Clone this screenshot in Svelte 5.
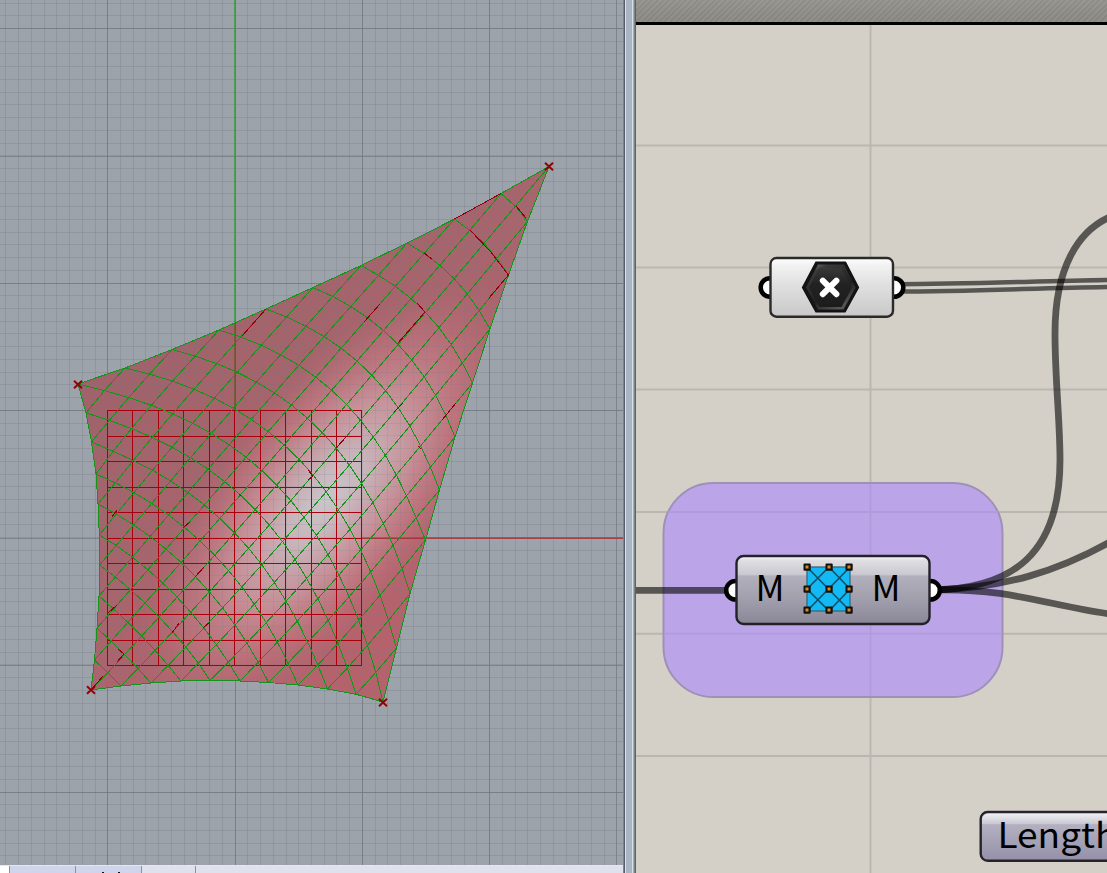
<script>
  const top = [[78,384],[125,368],[172,349.5],[219,330],[266,309],[313,287.5],[361,265.5],[407,243],[454.5,219],[501,193.5],[549,166.5]];
  const left = [[78,384],[86,413],[91.5,442],[96,474],[98,504],[99.3,535],[99.6,565],[99,596],[97,628],[94.5,660],[91,690]];
  const bottom = [[91,690],[121,686],[151,683],[181,681],[210,680.3],[240,681],[268.5,682.5],[298,685],[327.5,689],[356,694.3],[383,702]];
  const right = [[549,166.5],[527.5,221.5],[508.5,275],[490,329],[472.5,383],[455,437],[439.5,490],[425.5,540],[410,593.5],[396.5,648],[383,702]];

  // Relaxed cable net: edges are pinned, interior knots settle between their diagonal neighbours.
  const net = [];
  for (let j = 0; j <= 20; j++) {
    net.push([]);
    for (let i = 0; i <= 20; i++) net[j].push([275, 485]);
  }
  for (let k = 0; k <= 10; k++) {
    net[0][2 * k] = top[k];
    net[20][2 * k] = bottom[k];
    net[2 * k][0] = left[k];
    net[2 * k][20] = right[k];
  }
  for (let n = 0; n < 500; n++)
    for (let j = 1; j < 20; j++)
      for (let i = 1; i < 20; i++) {
        if ((i + j) % 2) continue;
        const q = [net[j-1][i-1], net[j-1][i+1], net[j+1][i-1], net[j+1][i+1]];
        net[j][i] = [0, 1].map((c) => (q[0][c] + q[1][c] + q[2][c] + q[3][c]) / 4);
      }
  const pts = (a) => a.map((p) => p[0].toFixed(1) + ',' + p[1].toFixed(1)).join(' ');
  const strands = [];
  const trace = (i, j, di) => {
    const a = [];
    while (i >= 0 && i <= 20 && j >= 0 && j <= 20) {
      a.push(net[j][i]);
      i += di;
      j += 1;
    }
    strands.push(pts(a));
  };
  for (let k = 0; k < 20; k += 2) trace(k, 0, 1);
  for (let k = 2; k < 20; k += 2) trace(0, k, 1);
  for (let k = 2; k <= 20; k += 2) trace(k, 0, -1);
  for (let k = 2; k < 20; k += 2) trace(20, k, -1);
  const outline = pts([...top, ...right.slice(1), ...[...bottom].reverse().slice(1), ...[...left].reverse().slice(1)]);

  const minorX = Array.from({ length: 50 }, (_, i) => Math.round(-20 + i * 12.73) + 0.5);
  const minorY = Array.from({ length: 69 }, (_, i) => Math.round(2.5 + i * 12.73) + 0.5);
  const majorX = [107.5, 235.5, 362.5, 489.5, 616.5];
  const majorY = [28.5, 156.5, 283.5, 410.5, 538.5, 665.5, 792.5];
  const cells = Array.from({ length: 11 }, (_, i) => i * 25.44);
  const anchors = [[549, 166.5], [78, 384.5], [91, 690], [383, 702.5]];
  const marks = 'M266 309L242 336M380 304L364 322M454.5 219L501 193.5M516 206L526 218M470 230L490 251L508.5 275L489 298M424 253L432 259M417 303L425 312L398 343M403 403L394 412M456 403L442 420M418 446L421 449M347 436L336 448M308 470L313 476L308 480M117 510L112 517M190 522L183 528M239 494L241 496M204 567L195 577M117 605L108 613M179 623L172 633M210 622L203 628M118 649L124 654L117 662M103 676L92 689';
  const knots = [2, 24, 45].flatMap((y) => [2, 24, 44].map((x) => [x, y]));
</script>

<div class="app">
  <section class="viewport">
    <svg class="scene" width="623" height="865" viewBox="0 0 623 865">
      <defs>
        <linearGradient id="base" gradientUnits="userSpaceOnUse" x1="150" y1="350" x2="390" y2="600">
          <stop offset="0" stop-color="#a0636b" /><stop offset=".45" stop-color="#a7656d" /><stop offset="1" stop-color="#b4636d" />
        </linearGradient>
        <radialGradient id="shine" gradientUnits="userSpaceOnUse" cx="0" cy="0" r="1" gradientTransform="translate(326 500) rotate(-51) scale(265 112)">
          <stop offset="0" stop-color="#c9c6cb" /><stop offset=".2" stop-color="#c9b9bf" stop-opacity=".95" />
          <stop offset=".48" stop-color="#ca979f" stop-opacity=".85" /><stop offset=".72" stop-color="#c57c85" stop-opacity=".55" />
          <stop offset="1" stop-color="#b86a72" stop-opacity="0" />
        </radialGradient>
        <clipPath id="sheet"><polygon points={outline} /></clipPath>
      </defs>
      <g class="minor">
        {#each minorX as x}<path d="M{x} 0V865" />{/each}
        {#each minorY as y}<path d="M0 {y}H623" />{/each}
      </g>
      <g class="major">
        {#each majorX as x}<path d="M{x} 0V865" />{/each}
        {#each majorY as y}<path d="M0 {y}H623" />{/each}
      </g>
      <path class="axis-y" d="M235.1 0V323" />
      <path class="axis-x" d="M425 538.1H623" />
      <polygon points={outline} fill="url(#base)" />
      <polygon points={outline} fill="url(#shine)" />
      <g class="minor through" clip-path="url(#sheet)">
        {#each minorX as x}<path d="M{x} 0V865" />{/each}
        {#each minorY as y}<path d="M0 {y}H623" />{/each}
      </g>
      <path d="M235.1 323V410" stroke="#655b2a" stroke-width="1.6" />
      <path d="M362 538.2H425" stroke="#a0373d" stroke-width="1.6" />
      <g class="cells">
        {#each cells as c}
          <path d="M{Math.round(107 + c) + 0.5} 410V665.5" />
          <path d="M107 {Math.round(410.4 + c * 1.002) + 0.5}H362" />
        {/each}
      </g>
      <g class="strands">
        {#each strands as s}<polyline points={s} />{/each}
        <polygon points={outline} />
      </g>
      <path class="marks" d={marks} />
      {#each anchors as [x, y]}
        <path class="anchor" d="M{x - 4} {y - 3.7}l8 7.4m0 -7.4l-8 7.4" />
      {/each}
    </svg>
    <div class="tabs"><i class="t0"></i><i class="t1"></i><i class="t2"><b></b><b></b></i><i class="t3"></i><i class="t4"></i></div>
  </section>
  <div class="splitter"></div>
  <section class="editor">
    <div class="toolbar"></div>
    <div class="canvas">
      <svg width="471" height="848" viewBox="636 25 471 848">
        <defs>
          <linearGradient id="light" x1="0" y1="0" x2="0" y2="1">
            <stop offset="0" stop-color="#fff" /><stop offset=".12" stop-color="#f2f2f2" /><stop offset=".5" stop-color="#dedede" /><stop offset="1" stop-color="#c8c8c8" />
          </linearGradient>
          <linearGradient id="steel" x1="0" y1="0" x2="0" y2="1">
            <stop offset="0" stop-color="#fafafa" /><stop offset=".07" stop-color="#dedee2" /><stop offset=".28" stop-color="#c9c8d0" />
            <stop offset=".29" stop-color="#b2b0bd" /><stop offset=".65" stop-color="#a19eac" /><stop offset="1" stop-color="#898696" />
          </linearGradient>
          <linearGradient id="lilac" x1="0" y1="0" x2="0" y2="1">
            <stop offset="0" stop-color="#f4f4f8" /><stop offset=".24" stop-color="#cac9d3" /><stop offset=".26" stop-color="#b3b0c1" /><stop offset="1" stop-color="#9490a8" />
          </linearGradient>
          <linearGradient id="hex" x1="0" y1="0" x2=".6" y2="1">
            <stop offset="0" stop-color="#8a8a8a" /><stop offset=".2" stop-color="#3a3a3a" /><stop offset=".7" stop-color="#202020" /><stop offset="1" stop-color="#555" />
          </linearGradient>
          <linearGradient id="core" x1="0" y1="0" x2="0" y2="1">
            <stop offset="0" stop-color="#383838" /><stop offset=".4" stop-color="#222" /><stop offset="1" stop-color="#1c1c1c" />
          </linearGradient>
        </defs>
        <path d="M870.5 25V873M636 145.5H1107M636 267.5H1107M636 389.5H1107M636 512H1107M636 633.7H1107M636 756H1107" stroke="#bbb7b0" stroke-width="2" fill="none" />
        <rect x="663.5" y="483" width="339" height="214" rx="50" fill="#bba5e8" stroke="#9f90b8" stroke-width="2" />
        <path d="M870.5 484V696M668 512H998M664 633.7H1002" stroke="#b09cdb" stroke-width="1.8" fill="none" />
        <g class="wires">
          <path d="M636 590.3H730" />
          <path d="M934 590C1012 588 1060 555 1060 460C1060 420 1055 380 1055 333C1055 268 1078 231 1110 217" />
          <path d="M934 590C1005 588 1058 571 1110 542" />
          <path d="M934 590C1010 588 1050 606 1110 614" />
          <path class="thin" d="M896 284.2C970 284 1040 281 1110 280" />
          <path class="thin" d="M896 291.6C970 291.5 1040 288 1110 287" />
        </g>
        <g fill="#fff" stroke="#000" stroke-width="4.5">
          <circle cx="770" cy="287.5" r="9.3" /><circle cx="894" cy="287.5" r="9.3" />
          <circle cx="735.5" cy="590.3" r="9.3" /><circle cx="930.5" cy="590.3" r="9.3" />
        </g>
        <rect x="770.5" y="258" width="122.5" height="58.7" rx="6" fill="url(#light)" stroke="#2a2a2a" stroke-width="2.4" />
        <path d="M816 262.2H845.5L858.5 287.5L845 311.8H816L802.5 287.5Z" fill="#151515" stroke="#111" stroke-width="1.4" stroke-linejoin="round" />
        <path d="M818 264.5H844L855.5 287.5L843.5 309.5H818L806 287.5Z" fill="url(#hex)" />
        <path d="M819 268.5H841L852 287.5L841.5 307H819.5L809 287.5Z" fill="url(#core)" />
        <path d="M822.8 280.6L836.4 294.2M836.4 280.6L822.8 294.2" stroke="#fff" stroke-width="6" stroke-linecap="round" />
        <rect x="736.5" y="556" width="193" height="68" rx="7" fill="url(#steel)" stroke="#24212b" stroke-width="2.4" />
        <text x="755.4" y="601.2" textLength="29" lengthAdjust="spacingAndGlyphs">M</text>
        <text x="871.6" y="601.2" textLength="29" lengthAdjust="spacingAndGlyphs">M</text>
        <g transform="translate(805 565)">
          <rect x="2" y="2" width="43" height="44" fill="#12b9f2" stroke="#39667c" stroke-width="1.3" />
          <path d="M2 2L45 46M24 2L45 24M2 24L24 46M45 2L2 46M24 2L2 24M45 24L24 46" stroke="#14506e" stroke-width="1.7" />
          {#each knots as [x, y]}
            <rect x={x - 3.5} y={y - 3.5} width="7.2" height="7.2" rx="1" fill="#15110c" />
            <rect x={x - 1.5} y={y - 1.5} width="3" height="3" fill="#d98c22" />
          {/each}
        </g>
        <rect x="980.7" y="812" width="160" height="48.8" rx="7" fill="url(#lilac)" stroke="#24242a" stroke-width="2.4" />
        <text x="997.5" y="847.7" textLength="120" lengthAdjust="spacingAndGlyphs">Length</text>
      </svg>
    </div>
  </section>
</div>

<style>
  :global(body) { overflow: hidden; }
  .app { display: flex; width: 1107px; height: 873px; overflow: hidden; }
  svg { display: block; }
  .viewport { width: 623px; display: flex; flex-direction: column; background: #9ca3ab; }
  .scene path, .scene polyline { fill: none; }
  .minor { stroke: #717b84; stroke-opacity: .3; }
  .through { stroke-opacity: .16; }
  .major { stroke: #6d7179; stroke-opacity: .62; }
  .axis-y { stroke: #35a03c; stroke-width: 1.8; }
  .axis-x { stroke: #a54047; stroke-width: 1.8; }
  .cells { stroke: #a8000c; stroke-width: 1; }
  .strands { fill: none; stroke: #16931a; stroke-width: 1; shape-rendering: crispEdges; }
  .marks { stroke: #930010; stroke-width: 1; shape-rendering: crispEdges; }
  .anchor { stroke: #950008; stroke-width: 2; }
  .tabs { display: flex; height: 8px; background: #dfe1ec; border-top: 1px solid #e5e7ef; box-sizing: border-box; }
  .tabs i { box-sizing: border-box; height: 7px; border-right: 1px solid #8e919c; }
  .tabs .t0 { width: 10px; background: #fff; }
  .t1, .t2 { width: 66px; background: #d1d5ec; }
  .tabs .t2 { display: flex; align-items: flex-end; gap: 14px; padding-left: 26px; }
  .t2 b { width: 2px; height: 1px; background: #111; }
  .t3 { width: 54px; }
  .tabs .t4 { border: 0; }
  .splitter { width: 13px; background: linear-gradient(90deg, #7c848d 0 1px, #565d66 1px 2px, #d8e0e9 2px 3px, #a9b5c4 3px 9px, #d9e0e5 9px 10px, #a4adb3 10px 11px, #7b8488 11px 12px, #5d6468 12px); }
  .editor { width: 471px; }
  .toolbar { height: 22px; border-bottom: 3px solid #000; background: repeating-linear-gradient(-45deg, transparent 0 2px, #ffffff14 2px 4px), linear-gradient(#908f89, #85847e); }
  .canvas { background: #d4d0c8; }
  .wires { fill: none; stroke: #000; stroke-opacity: .59; stroke-width: 6.8; }
  .wires .thin { stroke-width: 4.5; }
  text { font: 35px "Noto Sans CJK JP", "Noto Sans", sans-serif; fill: #000; }
</style>
